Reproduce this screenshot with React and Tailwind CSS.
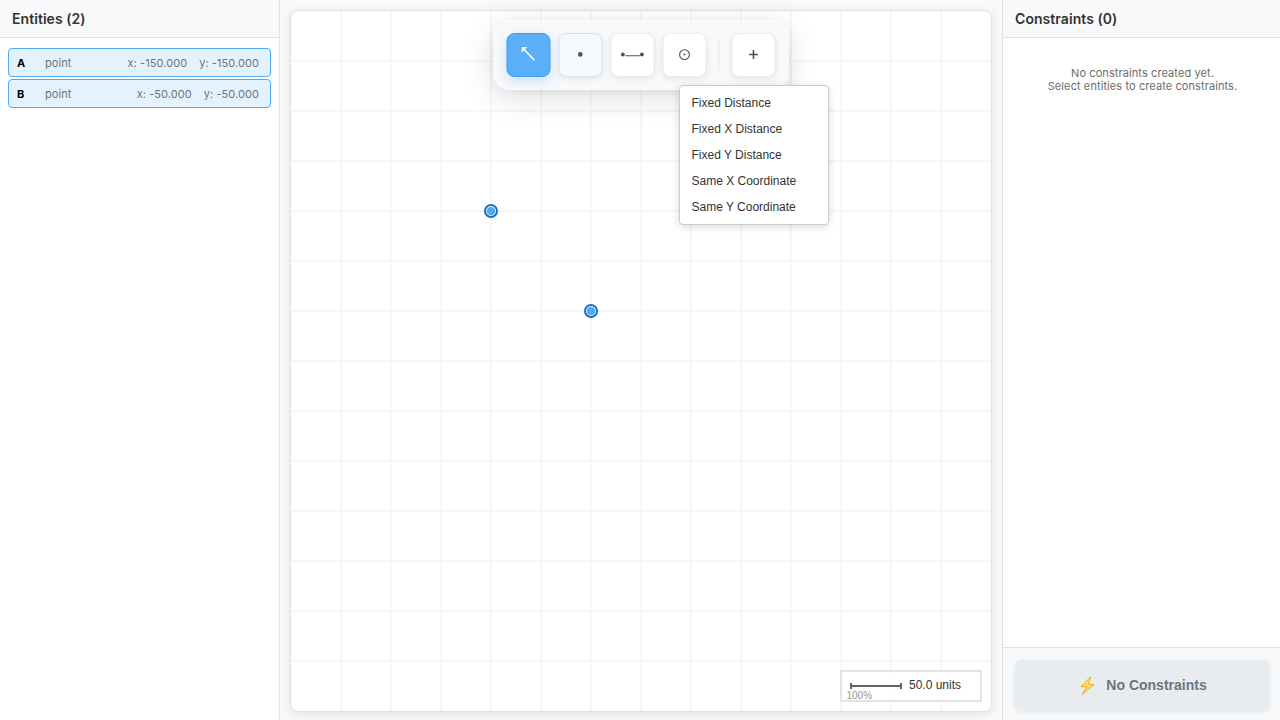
const entities = [
  { id: 'A', x: '-150.000', y: '-150.000' },
  { id: 'B', x: '-50.000', y: '-50.000' },
];

const points = [
  [200, 200],
  [300, 300],
];

const gridLines = Array.from({ length: 13 }, (_, i) => (i + 1) * 50);

const menuItems = [
  'Fixed Distance',
  'Fixed X Distance',
  'Fixed Y Distance',
  'Same X Coordinate',
  'Same Y Coordinate',
];

function PanelHeader({ children }) {
  return (
    <h3 className="h-[38px] shrink-0 border-b border-[#dee2e6] bg-[#f8f9fa] px-3 pt-px text-sm leading-[36px] font-semibold tracking-[0.06px] text-[#333]">
      {children}
    </h3>
  );
}

function EntityRow({ entity }) {
  return (
    <div className="flex h-[29px] items-center rounded border border-[#4dabf7] bg-[#e3f2fd] pt-[2px] pr-[11px] pl-2 text-[11px] tracking-[0.07px] text-[#6c757d]">
      <span className="w-7 font-bold text-black">{entity.id}</span>
      <span className="flex-1">point</span>
      <span className="flex gap-3">
        <span>x: {entity.x}</span>
        <span>y: {entity.y}</span>
      </span>
    </div>
  );
}

function ToolButton({ children, className = 'border-[#e9ecef] bg-white' }) {
  return (
    <button
      className={
        'flex size-11 shrink-0 items-center justify-center rounded-lg border shadow-[0_2px_6px_rgba(0,0,0,0.08)] ' +
        className
      }
    >
      <svg width="42" height="42" viewBox="0 0 42 42" fill="none">
        {children}
      </svg>
    </button>
  );
}

function Toolbar() {
  return (
    <div className="absolute top-[9px] left-1/2 flex h-[70px] w-[295px] -translate-x-1/2 items-center gap-2 rounded-2xl border border-white/40 bg-[#f8f9fb]/95 px-3 shadow-[0_8px_32px_rgba(0,0,0,0.12),0_2px_8px_rgba(0,0,0,0.06)]">
      <ToolButton className="border-[#4098e8] bg-[#5aaff8] shadow-[0_4px_12px_rgba(77,171,247,0.3)]">
        <path d="M16 15 27 26.4" stroke="#f4f9fe" strokeWidth="1.6" />
        <path d="M14.2 13h5.6l-5.6 5.8z" fill="#f4f9fe" />
      </ToolButton>
      <ToolButton className="border-[#d5e3ef] bg-[#f4f9fe]">
        <circle cx="20.8" cy="20.4" r="2.3" fill="#495057" />
      </ToolButton>
      <ToolButton>
        <circle cx="11.4" cy="20.5" r="1.9" fill="#495057" />
        <path d="M13.9 21.8h14.4" stroke="#495057" strokeWidth="1.1" />
        <circle cx="30.4" cy="20.5" r="1.9" fill="#495057" />
      </ToolButton>
      <ToolButton>
        <circle cx="21" cy="20.6" r="4.9" stroke="#495057" strokeWidth="1.1" />
        <circle cx="21" cy="20.5" r="1" fill="#495057" />
      </ToolButton>
      <div className="mx-1 h-8 w-px bg-[#e6e9ed]" />
      <ToolButton>
        <path d="M16.6 20.5h8.8M21 16.1v8.8" stroke="#495057" strokeWidth="1.6" />
      </ToolButton>
    </div>
  );
}

function ConstraintMenu() {
  return (
    <ul className="absolute top-[74px] left-[388px] h-[140px] w-[150px] rounded border border-[#ccc] bg-white py-1 font-['Liberation_Sans',Arial,sans-serif] text-xs text-[#333] shadow-[0_2px_8px_rgba(0,0,0,0.15)]">
      {menuItems.map((item) => (
        <li key={item} className="h-[26px] pl-[11.5px] leading-[26px]">
          {item}
        </li>
      ))}
    </ul>
  );
}

function Canvas() {
  return (
    <div className="relative h-[702px] w-[702px] rounded-lg border border-[#dee2e6] bg-white shadow-[0_2px_10px_rgba(0,0,0,0.1)]">
      <svg className="block rounded-[7px]" width="700" height="700" viewBox="0 0 700 700">
        <g stroke="#f6f6f6" strokeWidth="2">
          {gridLines.map((p) => (
            <path key={p} d={`M${p} 0V700M0 ${p}H700`} />
          ))}
        </g>
        {points.map(([x, y]) => (
          <g key={x}>
            <circle cx={x} cy={y} r="6" fill="white" stroke="#1971c2" strokeWidth="2" />
            <circle cx={x} cy={y} r="4.3" fill="#4dabf7" />
          </g>
        ))}
        <g className="font-['Liberation_Sans',Arial,sans-serif]">
          <rect x="550" y="660" width="140" height="30" fill="white" fillOpacity="0.9" stroke="#e3e3e3" strokeWidth="2" />
          <path d="M560 675h50" stroke="#666" strokeWidth="2" />
          <path d="M560 672v6M610 672v6" stroke="#666" strokeWidth="2" />
          <text x="618" y="678" fontSize="12" fill="#333">50.0 units</text>
          <text x="555.5" y="688" fontSize="10" fill="#999">100%</text>
        </g>
      </svg>
      <Toolbar />
      <ConstraintMenu />
    </div>
  );
}

export default function App() {
  return (
    <div className="flex h-screen w-screen overflow-hidden bg-[#f8f9fa] font-[Inter,sans-serif]">
      <aside className="flex w-[280px] shrink-0 flex-col border-r border-[#dee2e6] bg-white">
        <PanelHeader>Entities (2)</PanelHeader>
        <div className="flex flex-col gap-0.5 px-2 pt-2.5">
          {entities.map((entity) => (
            <EntityRow key={entity.id} entity={entity} />
          ))}
        </div>
      </aside>
      <main className="w-[722px] shrink-0 p-2.5">
        <Canvas />
      </main>
      <aside className="flex w-[278px] shrink-0 flex-col border-l border-[#dee2e6] bg-white">
        <PanelHeader>Constraints (0)</PanelHeader>
        <p className="flex-1 pt-[29px] pl-0.5 text-center text-[11px] leading-[13px] tracking-[0.09px] text-[#6c6c6c]">
          No constraints created yet.
          <br />
          Select entities to create constraints.
        </p>
        <div className="h-[73px] border-t border-[#dee2e6] bg-[#f8f9fa] pt-3 pl-3">
          <button className="flex h-[50px] w-[255px] items-center justify-center gap-2 rounded-md bg-[#e9ecef] font-['Liberation_Sans',Arial,sans-serif] text-sm font-bold text-[#6c757d] shadow-[0_2px_4px_rgba(0,0,0,0.08)]">
            <svg width="20" height="22" viewBox="0 0 20 22">
              <path d="M12.6 2.8 3 12.6l5.8.2L4 20.4 16 10.6l-5.6-.6z" fill="#ffe066" stroke="#f5a623" strokeWidth="1" strokeLinejoin="round" />
            </svg>
            No Constraints
          </button>
        </div>
      </aside>
    </div>
  );
}
